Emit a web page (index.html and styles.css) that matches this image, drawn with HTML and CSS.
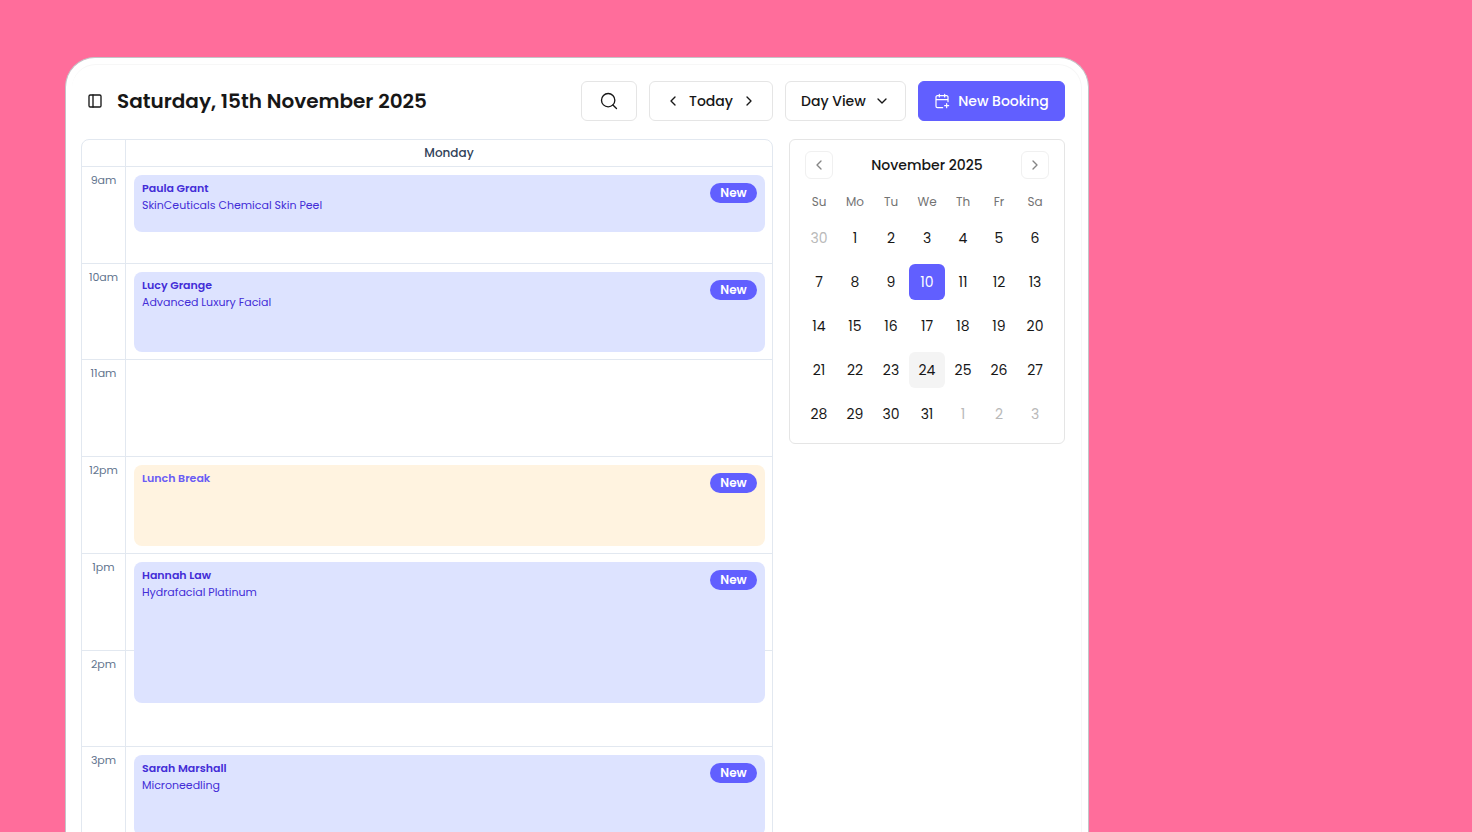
FILE: index.html
```html
<!DOCTYPE html>
<html lang="en">
<head>
<meta charset="utf-8">
<meta name="viewport" content="width=device-width, initial-scale=1">
<title>Bookings calendar</title>
<link rel="stylesheet" href="styles.css">
</head>
<body>
<div class="window">
<div class="panel">
  <header class="toolbar">
    <button class="sidebar-toggle" type="button" aria-label="Toggle sidebar">
      <svg class="icon" viewBox="0 0 24 24"><rect x="3" y="3" width="18" height="18" rx="2"/><path d="M9 3v18"/></svg>
    </button>
    <h1 class="title">Saturday, 15th November 2025</h1>
    <div class="actions">
      <button class="btn btn-search" type="button" aria-label="Search">
        <svg class="icon icon-lg" viewBox="0 0 24 24"><circle cx="11" cy="11" r="8"/><path d="m21 21-4.3-4.3"/></svg>
      </button>
      <div class="btn stepper">
        <button class="plain" type="button" aria-label="Previous day"><svg class="icon" viewBox="0 0 24 24"><path d="m15 18-6-6 6-6"/></svg></button>
        <button class="plain" type="button">Today</button>
        <button class="plain" type="button" aria-label="Next day"><svg class="icon" viewBox="0 0 24 24"><path d="m9 18 6-6-6-6"/></svg></button>
      </div>
      <div class="view">
        <select class="btn view-select" aria-label="View"><option>Day View</option></select>
        <svg class="icon view-arrow" viewBox="0 0 24 24"><path d="m6 9 6 6 6-6"/></svg>
      </div>
      <button class="btn btn-primary" type="button">
        <svg class="icon icon-thin" viewBox="0 0 24 24"><path d="M8 2v4M16 2v4M3 10h18M21 13V6a2 2 0 0 0-2-2H5a2 2 0 0 0-2 2v14a2 2 0 0 0 2 2h8M19 16v6M16 19h6"/></svg>
        New Booking
      </button>
    </div>
  </header>
  <main class="content">
    <section class="schedule" aria-label="Day schedule">
      <div class="schedule-head"><span class="gutter"></span><h2 class="day">Monday</h2></div>
      <div class="schedule-body">
        <div class="hours">
          <div class="hour"><span class="time">9am</span></div>
          <div class="hour"><span class="time">10am</span></div>
          <div class="hour"><span class="time">11am</span></div>
          <div class="hour"><span class="time">12pm</span></div>
          <div class="hour"><span class="time">1pm</span></div>
          <div class="hour"><span class="time">2pm</span></div>
          <div class="hour"><span class="time">3pm</span></div>
        </div>
        <div class="events">
          <article class="event" style="grid-row: 1 / span 18"><div><h3 class="client">Paula Grant</h3><p class="service">SkinCeuticals Chemical Skin Peel</p></div><span class="badge">New</span></article>
          <article class="event" style="grid-row: 25 / span 24"><div><h3 class="client">Lucy Grange</h3><p class="service">Advanced Luxury Facial</p></div><span class="badge">New</span></article>
          <article class="event event-break" style="grid-row: 73 / span 24"><div><h3 class="client">Lunch Break</h3></div><span class="badge">New</span></article>
          <article class="event" style="grid-row: 97 / span 39"><div><h3 class="client">Hannah Law</h3><p class="service">Hydrafacial Platinum</p></div><span class="badge">New</span></article>
          <article class="event" style="grid-row: 145 / span 24"><div><h3 class="client">Sarah Marshall</h3><p class="service">Microneedling</p></div><span class="badge">New</span></article>
        </div>
      </div>
    </section>
    <aside class="calendar">
      <div class="calendar-head">
        <button class="nav" type="button" aria-label="Previous month"><svg class="icon" viewBox="0 0 24 24"><path d="m15 18-6-6 6-6"/></svg></button>
        <h2 class="month">November 2025</h2>
        <button class="nav" type="button" aria-label="Next month"><svg class="icon" viewBox="0 0 24 24"><path d="m9 18 6-6-6-6"/></svg></button>
      </div>
      <table class="dates">
        <thead><tr><th>Su</th><th>Mo</th><th>Tu</th><th>We</th><th>Th</th><th>Fr</th><th>Sa</th></tr></thead>
        <tbody>
          <tr><td><button class="date outside">30</button></td><td><button class="date">1</button></td><td><button class="date">2</button></td><td><button class="date">3</button></td><td><button class="date">4</button></td><td><button class="date">5</button></td><td><button class="date">6</button></td></tr>
          <tr><td><button class="date">7</button></td><td><button class="date">8</button></td><td><button class="date">9</button></td><td><button class="date selected">10</button></td><td><button class="date">11</button></td><td><button class="date">12</button></td><td><button class="date">13</button></td></tr>
          <tr><td><button class="date">14</button></td><td><button class="date">15</button></td><td><button class="date">16</button></td><td><button class="date">17</button></td><td><button class="date">18</button></td><td><button class="date">19</button></td><td><button class="date">20</button></td></tr>
          <tr><td><button class="date">21</button></td><td><button class="date">22</button></td><td><button class="date">23</button></td><td><button class="date today">24</button></td><td><button class="date">25</button></td><td><button class="date">26</button></td><td><button class="date">27</button></td></tr>
          <tr><td><button class="date">28</button></td><td><button class="date">29</button></td><td><button class="date">30</button></td><td><button class="date">31</button></td><td><button class="date outside">1</button></td><td><button class="date outside">2</button></td><td><button class="date outside">3</button></td></tr>
        </tbody>
      </table>
    </aside>
  </main>
</div>
</div>
</body>
</html>
```
FILE: styles.css
```css
* { box-sizing: border-box; margin: 0; }

body {
  height: 100vh;
  overflow: hidden;
  padding: 57px 383px 0 65px;
  background: #ff6d9b;
  color: #171717;
  font-family: Poppins, Inter, sans-serif;
  font-size: 14px;
  line-height: 20px;
}

button, select { font: inherit; color: inherit; background: none; border: 0; padding: 0; cursor: pointer; }
h1, h2, h3 { font: inherit; }

.window {
  min-height: 100%;
  padding: 6px 6px 0;
  background: #fff;
  border: 1px solid #c4c4c8;
  border-bottom: 0;
  border-radius: 30px 30px 0 0;
}

.panel {
  padding: 16px 16px 0 9px;
  border: solid #f7f7f7;
  border-width: 1px 1px 0 0;
  border-radius: 24px 24px 0 0;
}

.icon { width: 16px; height: 16px; flex: none; display: block; fill: none; stroke: currentColor; stroke-width: 2; stroke-linecap: round; stroke-linejoin: round; }
.icon-lg { width: 20px; height: 20px; stroke-width: 1.6; }
.icon-thin { stroke-width: 1.8; }

.toolbar { display: flex; align-items: center; margin-bottom: 18px; }
.sidebar-toggle { display: grid; place-items: center; width: 28px; height: 28px; }
.title { margin-left: 8px; font-size: 20px; line-height: 28px; font-weight: 600; white-space: nowrap; }
.actions { display: flex; gap: 12px; margin-left: auto; }

.btn {
  display: flex;
  align-items: center;
  justify-content: center;
  height: 40px;
  background: #fff;
  border: 1px solid #e5e5e5;
  border-radius: 6px;
  font-weight: 500;
  white-space: nowrap;
}
.btn-search { width: 56px; }
.stepper { width: 124px; gap: 8px; }
.view { position: relative; }
.view-select { width: 121px; padding: 0 15px; appearance: none; }
.view-arrow { position: absolute; top: 12px; right: 16px; pointer-events: none; }
.btn-primary { width: 147px; gap: 8px; background: #615fff; border-color: #615fff; color: #fff; }

.content { display: grid; grid-template-columns: minmax(0, 1fr) 276px; gap: 16px; align-items: start; }

.schedule { border: 1px solid #e2e8f0; border-radius: 8px; }
.schedule-head { display: grid; grid-template-columns: 44px 1fr; height: 27px; border-bottom: 1px solid #e2e8f0; }
.gutter { border-right: 1px solid #e2e8f0; }
.day { text-align: center; font-size: 12px; line-height: 26px; font-weight: 500; color: #314158; }
.schedule-body { display: grid; grid-template-columns: 44px 1fr; height: 677px; }
.hours { grid-area: 1 / 1 / 2 / 3; display: grid; grid-template-rows: repeat(7, 1fr); }
.hour { display: flex; border-bottom: 1px solid #e2e8f0; }
.time { width: 44px; padding-top: 5px; border-right: 1px solid #e2e8f0; text-align: center; font-size: 11px; line-height: 17px; color: #62748e; }
.events { grid-area: 1 / 2 / 2 / 3; display: grid; grid-template-rows: repeat(168, minmax(0, 1fr)); padding: 0 7px 0 8px; }
.event { display: flex; justify-content: space-between; align-items: flex-start; margin: 8px 0; padding: 5px 8px; border-radius: 8px; background: #dde3ff; color: #432dd7; font-size: 11px; line-height: 17px; }
.client { font-weight: 600; }
.event-break { background: #fff3e0; }
.event-break .client { color: #6a5cf5; }
.badge { width: 47px; margin-top: 3px; border-radius: 10px; background: #615fff; color: #fff; text-align: center; font-size: 12px; line-height: 20px; font-weight: 600; }

.calendar { padding: 11px; border: 1px solid #e5e5e5; border-radius: 6px; }
.calendar-head { display: flex; align-items: center; justify-content: space-between; margin-bottom: 12px; padding: 0 4px; }
.nav { display: grid; place-items: center; width: 28px; height: 28px; border: 1px solid #f0f0f0; border-radius: 6px; color: #858585; }
.month { font-weight: 500; }
.dates { width: 100%; border-collapse: collapse; table-layout: fixed; }
.dates th { height: 21px; padding: 0; font-size: 12px; font-weight: 400; color: #737373; }
.dates td { padding: 8px 0 0; }
.date { display: block; width: 36px; height: 36px; margin: 0 auto; border-radius: 6px; }
.date.outside { color: #b9b9b9; }
.date.selected { background: #615fff; color: #fff; }
.date.today { background: #f4f4f4; }
```
